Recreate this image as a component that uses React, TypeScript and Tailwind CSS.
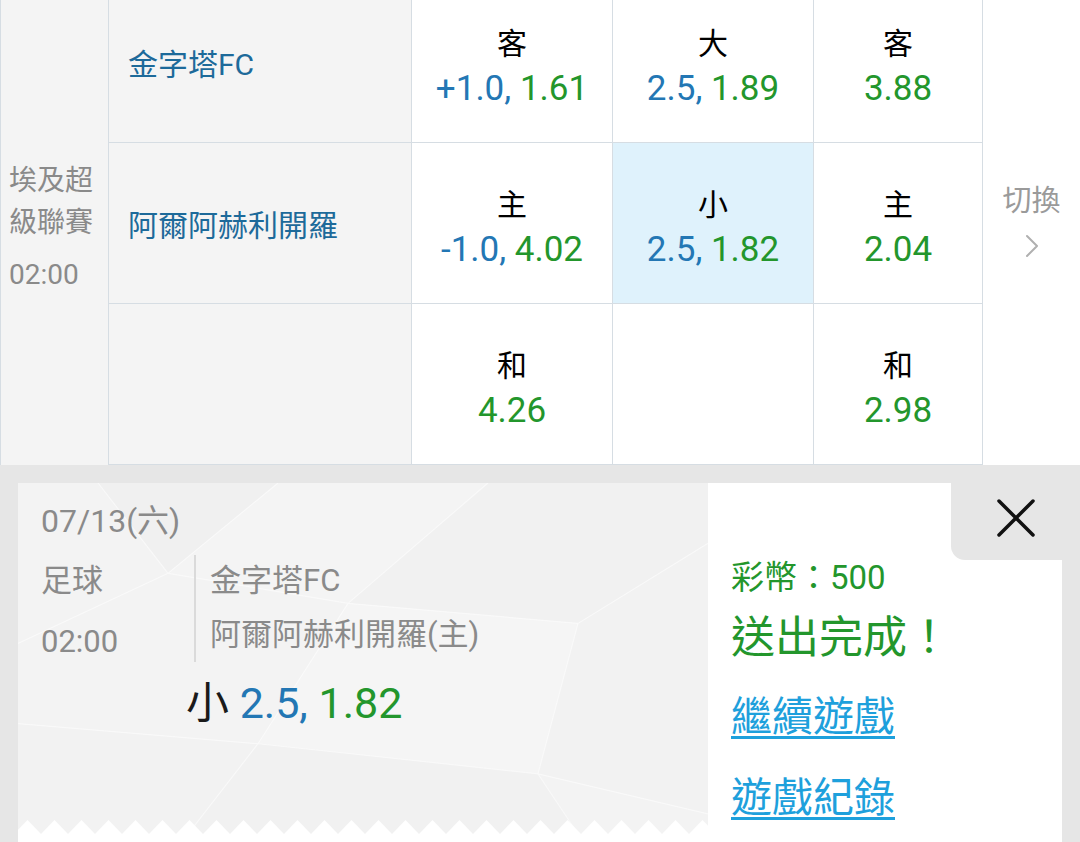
import { ChevronRight } from 'lucide-react';

const font = "font-['Roboto','Noto_Sans_CJK_TC',sans-serif]";

const BLUE = 'text-[#2377b4]';
const GREEN = 'text-[#23962c]';

type Odd = { label: string; line?: string; price: string } | null;

const rows: { team: string; odds: Odd[] }[] = [
  {
    team: '金字塔FC',
    odds: [
      { label: '客', line: '+1.0', price: '1.61' },
      { label: '大', line: '2.5', price: '1.89' },
      { label: '客', price: '3.88' },
    ],
  },
  {
    team: '阿爾阿赫利開羅',
    odds: [
      { label: '主', line: '-1.0', price: '4.02' },
      { label: '小', line: '2.5', price: '1.82' },
      { label: '主', price: '2.04' },
    ],
  },
  {
    team: '',
    odds: [{ label: '和', price: '4.26' }, null, { label: '和', price: '2.98' }],
  },
];

const OddCell = ({ odd, active, wide }: { odd: Odd; active?: boolean; wide?: boolean }) => (
  <div
    className={`flex flex-col items-center justify-center pt-[9px] border-r border-b border-[#d6dde3] ${
      active ? 'bg-[#dff2fc]' : 'bg-white'
    } ${wide ? 'w-[201px]' : 'w-[169px]'}`}
  >
    {odd && (
      <>
        <span className="text-[30px] leading-[44px] text-black">{odd.label}</span>
        <span className="text-[35px] leading-[46px]">
          {odd.line && <span className={BLUE}>{odd.line}, </span>}
          <span className={GREEN}>{odd.price}</span>
        </span>
      </>
    )}
  </div>
);

// faint low-poly pattern behind the ticket
const TicketPattern = () => (
  <svg className="absolute inset-0 w-full h-full" viewBox="0 0 690 350" preserveAspectRatio="none">
    <polygon points="0,0 80,0 150,90 0,160" fill="#f3f3f3" />
    <polygon points="80,0 260,0 150,90" fill="#f0f0f0" />
    <polygon points="260,0 470,0 330,120 150,90" fill="#f4f4f4" />
    <polygon points="470,0 690,0 690,60 560,140 330,120" fill="#f1f1f1" />
    <polygon points="0,160 150,90 330,120 240,260 0,240" fill="#f3f3f3" />
    <polygon points="330,120 560,140 520,290 240,260" fill="#f5f5f5" />
    <polygon points="560,140 690,60 690,330 520,290" fill="#f2f2f2" />
    <polygon points="0,240 240,260 170,350 0,350" fill="#f2f2f2" />
    <polygon points="240,260 520,290 560,350 170,350" fill="#f1f1f1" />
    <polygon points="520,290 690,330 690,350 560,350" fill="#f3f3f3" />
    <g stroke="#ffffff" strokeWidth="1.2" fill="none" opacity="0.55">
      <path d="M80 0 L150 90 L0 160" />
      <path d="M260 0 L150 90 L330 120 L470 0" />
      <path d="M330 120 L560 140 L690 60" />
      <path d="M330 120 L240 260 L0 240" />
      <path d="M240 260 L520 290 L560 140" />
      <path d="M520 290 L690 330" />
      <path d="M240 260 L170 350" />
      <path d="M520 290 L560 350" />
    </g>
  </svg>
);

const Zigzag = () => (
  <svg className="absolute left-0 bottom-0 w-full h-[14px]">
    <defs>
      <pattern id="teeth" width="27" height="14" patternUnits="userSpaceOnUse" x="-4">
        <path d="M0 14 L13.5 0 L27 14 Z" fill="#ffffff" />
      </pattern>
    </defs>
    <rect width="100%" height="14" fill="url(#teeth)" />
  </svg>
);

export default function App() {
  return (
    <div className={`w-[1080px] h-[842px] overflow-hidden bg-[#e6e6e6] ${font}`}>
      {/* odds table, scrolled a little */}
      <div className="flex -mt-[18px] h-[483px]">
        <div className="w-[109px] shrink-0 border-l border-r border-[#d6dde3] bg-[#f4f4f4] flex flex-col justify-center pl-2 pt-[9px] text-[#8a8a8a] text-[28px]">
          <div className="leading-[42px]">
            埃及超
            <br />
            級聯賽
          </div>
          <div className="leading-[42px] mt-[10px]">02:00</div>
        </div>

        <div className="flex flex-col">
          {rows.map((row, i) => (
            <div key={i} className="flex h-[161px]">
              <div className="w-[303px] flex items-center pl-[19px] pt-1 bg-[#f4f4f4] border-r border-b border-[#d6dde3] text-[30px] text-[#1d6a9a]">
                {row.team}
              </div>
              <OddCell odd={row.odds[0]} wide />
              <OddCell odd={row.odds[1]} wide active={i === 1} />
              <OddCell odd={row.odds[2]} />
            </div>
          ))}
        </div>

        <div className="w-[97px] bg-white flex flex-col items-center justify-center pt-[2px] text-[#9a9a9a]">
          <span className="text-[29px] leading-[36px]">切換</span>
          <ChevronRight size={40} strokeWidth={1.2} className="mt-[7px] text-[#b0b0b0]" />
        </div>
      </div>

      {/* bet slip */}
      <div className="relative h-[377px] pt-[18px] px-[18px]">
        <div className="flex h-full bg-white">
          <div className="relative w-[690px] h-[351px] bg-[#f2f2f2] pl-[23px] pt-[18px] text-[#8a8a8a]">
            <TicketPattern />
            <Zigzag />
            <div className="relative">
              <div className="text-[32px] leading-[40px]">07/13(六)</div>
              <div className="flex mt-[20px]">
                <div className="w-[153px] text-[31px] leading-[40px]">
                  <div>足球</div>
                  <div className="mt-[21px]">02:00</div>
                </div>
                <div className="border-l-2 border-[#dadada] -mt-[6px] pt-[6px] pb-[7px] pl-[14px] text-[31px] leading-[40px]">
                  <div>金字塔FC</div>
                  <div className="mt-[14px]">阿爾阿赫利開羅(主)</div>
                </div>
              </div>
              <div className="ml-[145px] mt-[16px] text-[43px] leading-[50px]">
                <span className="text-[#1a1a1a]">小 </span>
                <span className={BLUE}>2.5, </span>
                <span className={GREEN}>1.82</span>
              </div>
            </div>
          </div>

          <div className="flex-1 pl-[23px] pt-[75px]">
            <div className="text-[33px] leading-[40px] text-[#23962c]">彩幣：500</div>
            <div className="mt-[14px] text-[44px] leading-[52px] text-[#23962c]">送出完成！</div>
            <a className="block mt-[28px] text-[41px] leading-[50px] text-[#1ea0dc] underline decoration-[3px] underline-offset-[5px]">
              繼續遊戲
            </a>
            <a className="block mt-[31px] text-[41px] leading-[50px] text-[#1ea0dc] underline decoration-[3px] underline-offset-[5px]">
              遊戲紀錄
            </a>
          </div>
        </div>

        {/* close tab over the slip corner */}
        <button className="absolute top-0 right-0 w-[129px] h-[95px] bg-[#e6e6e6] rounded-bl-[14px] flex items-center justify-center pt-[11px]">
          <svg width="40" height="40" viewBox="0 0 40 40">
            <path d="M3 3 L37 37 M37 3 L3 37" stroke="#111" strokeWidth="3.5" strokeLinecap="round" />
          </svg>
        </button>
      </div>
    </div>
  );
}
